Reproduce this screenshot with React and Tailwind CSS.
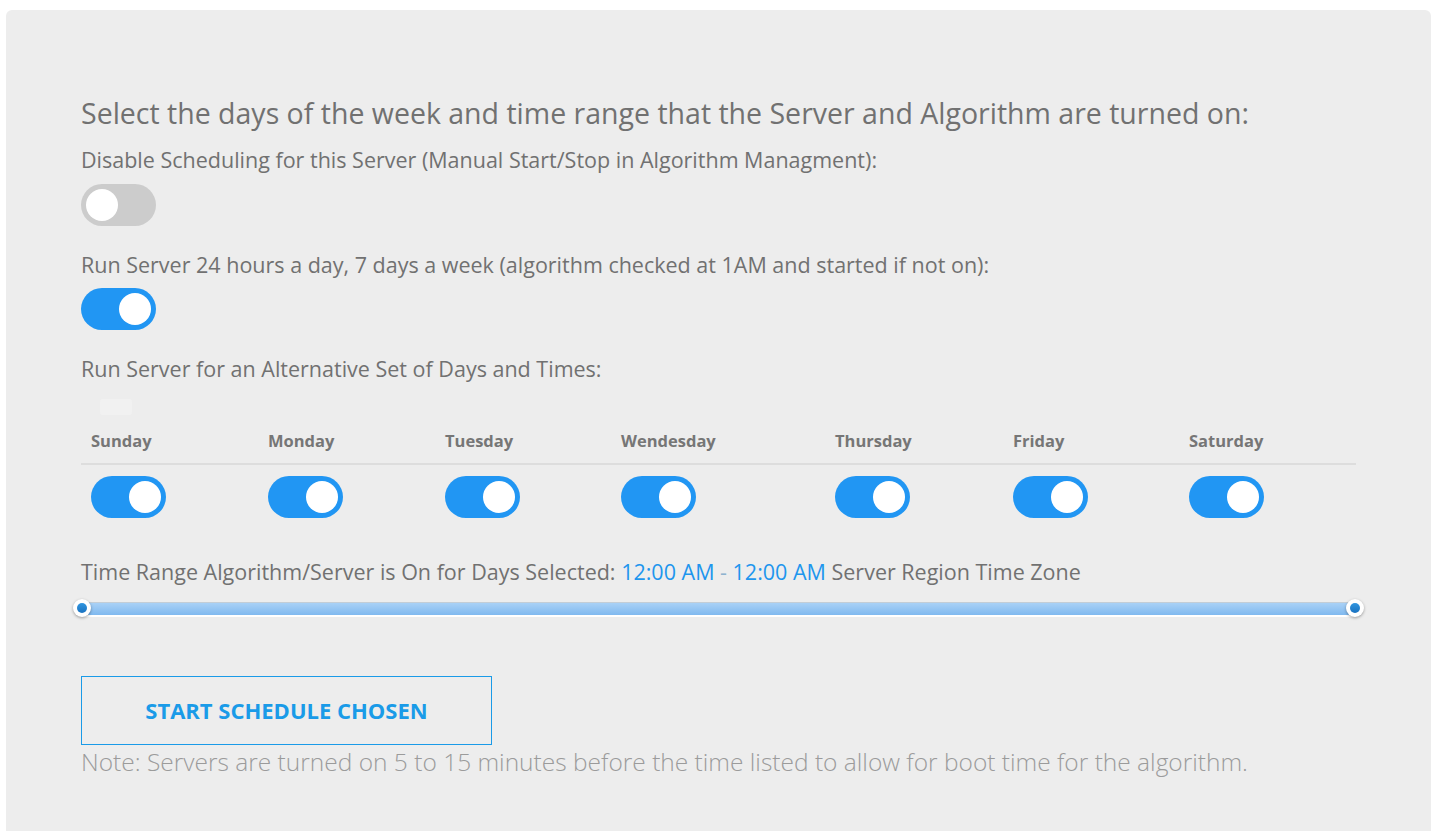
import React from "react";

const Toggle = ({ on }) => (
  <div
    className={
      on
        ? "relative h-[42px] w-[75px] rounded-full bg-[#2196f3]"
        : "relative h-[42px] w-[75px] rounded-full bg-[#cccccc]"
    }
  >
    <div
      className={
        on
          ? "absolute left-[38px] top-[5px] h-[32px] w-[32px] rounded-full bg-white"
          : "absolute left-[5px] top-[5px] h-[32px] w-[32px] rounded-full bg-white"
      }
    />
  </div>
);

const Handle = ({ side }) => (
  <div
    className={
      side === "left"
        ? "absolute left-[-9px] top-[0px] flex h-[18px] w-[18px] items-center justify-center rounded-full bg-white shadow-[0_1px_3px_rgba(0,0,0,0.35)]"
        : "absolute right-[-9px] top-[0px] flex h-[18px] w-[18px] items-center justify-center rounded-full bg-white shadow-[0_1px_3px_rgba(0,0,0,0.35)]"
    }
  >
    <div className="h-[10px] w-[10px] rounded-full bg-gradient-to-b from-[#3196e0] to-[#1a72c0]" />
  </div>
);

const days = ["Sunday", "Monday", "Tuesday", "Wendesday", "Thursday", "Friday", "Saturday"];

export default function App() {
  return (
    <div className="min-h-screen bg-white pt-[10px] font-['Open_Sans',sans-serif]">
      <div className="ml-[6px] w-[1425px] rounded-t-md bg-[#ededed] pb-[60px] pl-[75px] pt-[86px] text-[#717171]">
        <h2 className="text-[28.5px] leading-[34px] font-normal">
          Select the days of the week and time range that the Server and Algorithm are turned on:
        </h2>
        <div className="mt-[16px] text-[21.5px] leading-[28px]">
          Disable Scheduling for this Server (Manual Start/Stop in Algorithm Managment):
        </div>
        <div className="mt-[10px]">
          <Toggle on={false} />
        </div>
        <div className="mt-[25px] text-[21.5px] leading-[28px]">
          Run Server 24 hours a day, 7 days a week (algorithm checked at 1AM and started if not on):
        </div>
        <div className="mt-[9px]">
          <Toggle on={true} />
        </div>
        <div className="mt-[25px] text-[21.5px] leading-[28px]">
          Run Server for an Alternative Set of Days and Times:
        </div>
        <div className="ml-[19px] mt-[16px] h-[16px] w-[32px] rounded-[3px] bg-[#f1f1f1]" />
        <div className="mt-[14px] grid w-[1275px] grid-cols-[177px_177px_176px_214px_178px_176px_1fr]">
          {days.map((d) => (
            <div
              key={d}
              className="border-b-2 border-[#dddddd] pb-[10px] pl-[10px] text-[16.5px] font-bold leading-[24px] text-[#767676]"
            >
              {d}
            </div>
          ))}
          {days.map((d) => (
            <div key={d + "t"} className="pl-[10px] pt-[11px]">
              <Toggle on={true} />
            </div>
          ))}
        </div>
        <div className="mt-[40px] text-[21.5px] leading-[28px]">
          Time Range Algorithm/Server is On for Days Selected:{" "}
          <span className="text-[#1e96ee]">12:00 AM</span>{" "}
          <span className="text-[#8fb3cf]">-</span>{" "}
          <span className="text-[#1e96ee]">12:00 AM</span> Server Region Time Zone
        </div>
        <div className="relative ml-[1px] mt-[13px] h-[20px] w-[1273px]">
          <div className="absolute left-0 right-0 top-[3px] h-[15px] border-b-2 border-t border-b-white border-t-[#c3cdd6] bg-gradient-to-b from-[#a9d1f6] to-[#80b9ef]" />
          <Handle side="left" />
          <Handle side="right" />
        </div>
        <button className="mt-[57px] flex h-[69px] w-[411px] items-center justify-center border border-[#1a9be8] text-[22px] font-bold text-[#1a9be8]">
          START SCHEDULE CHOSEN
        </button>
        <div className="mt-[3px] text-[24.5px] font-light leading-[28px] text-[#9b9b9b]">
          Note: Servers are turned on 5 to 15 minutes before the time listed to allow for boot time for the algorithm.
        </div>
      </div>
    </div>
  );
}
